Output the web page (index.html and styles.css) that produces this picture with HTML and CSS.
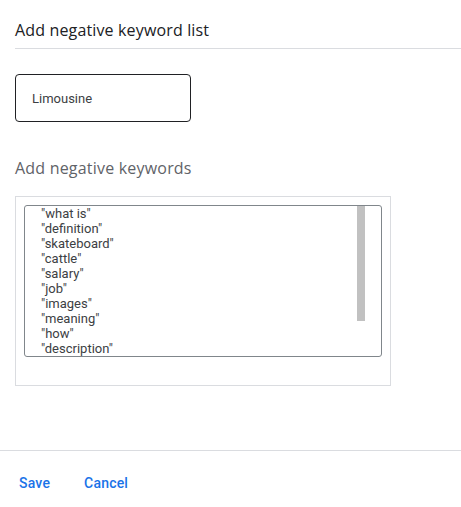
FILE: index.html
```html
<!DOCTYPE html>
<html>
<head>
<meta charset="utf-8">
<link rel="stylesheet" href="styles.css">
</head>
<body>
<div class="dialog">
  <div class="header">
    <h1 class="title">Add negative keyword list</h1>
  </div>
  <div class="body">
    <div class="name-field">Limousine</div>
    <h2 class="subtitle">Add negative keywords</h2>
    <div class="kw-panel">
      <div class="kw-area">
        <div class="kw-lines">
          <div>"what is"</div>
          <div>"definition"</div>
          <div>"skateboard"</div>
          <div>"cattle"</div>
          <div>"salary"</div>
          <div>"job"</div>
          <div>"images"</div>
          <div>"meaning"</div>
          <div>"how"</div>
          <div>"description"</div>
        </div>
        <div class="kw-track"><div class="kw-thumb"></div></div>
      </div>
    </div>
  </div>
  <div class="footer">
    <button class="btn">Save</button>
    <button class="btn">Cancel</button>
  </div>
</div>
</body>
</html>
```
FILE: styles.css
```css
html, body {
  margin: 0;
  padding: 0;
  background: #ffffff;
}
body {
  font-family: Roboto, "Liberation Sans", sans-serif;
  color: #202124;
}
.dialog {
  width: 461px;
  height: 507px;
  display: flex;
  flex-direction: column;
}
.header {
  margin-left: 15px;
  padding-top: 20px;
  height: 28px;
  border-bottom: 1px solid #dadce0;
}
.title {
  margin: 0;
  font-family: "Open Sans", Roboto, sans-serif;
  font-size: 16px;
  font-weight: 400;
  line-height: 20px;
  color: #202124;
  letter-spacing: 0.15px;
}
.body {
  padding: 25px 0 0 15px;
  flex: 1;
}
.name-field {
  box-sizing: border-box;
  width: 176px;
  height: 48px;
  border: 1px solid #202124;
  border-radius: 4px;
  padding-left: 16px;
  display: flex;
  align-items: center;
  font-size: 13px;
  color: #3c4043;
}
.subtitle {
  margin: 36px 0 0 0;
  font-family: "Open Sans", Roboto, sans-serif;
  font-size: 16px;
  font-weight: 400;
  line-height: 20px;
  color: #5f6368;
  letter-spacing: 0.2px;
}
.kw-panel {
  margin-top: 18px;
  box-sizing: border-box;
  width: 376px;
  height: 190px;
  border: 1px solid #dadce0;
  padding: 8px;
}
.kw-area {
  box-sizing: border-box;
  width: 358px;
  height: 152px;
  border: 1px solid #80868b;
  border-radius: 3px;
  display: flex;
  padding-right: 16px;
}
.kw-lines {
  flex: 1;
  padding-left: 16px;
  font-size: 13px;
  line-height: 15px;
  color: #3c4043;
}
.kw-track {
  width: 8px;
}
.kw-thumb {
  height: 115px;
  background: #c1c1c1;
}
.footer {
  height: 57px;
  border-top: 1px solid #dadce0;
  display: flex;
  align-items: center;
  padding-left: 8px;
  padding-top: 7px;
  box-sizing: border-box;
}
.btn {
  background: none;
  border: none;
  font-family: Roboto, "Liberation Sans", sans-serif;
  font-size: 14px;
  font-weight: 500;
  color: #1a73e8;
  padding: 0 11px;
  height: 36px;
  margin-right: 12px;
  letter-spacing: 0.2px;
}
```
